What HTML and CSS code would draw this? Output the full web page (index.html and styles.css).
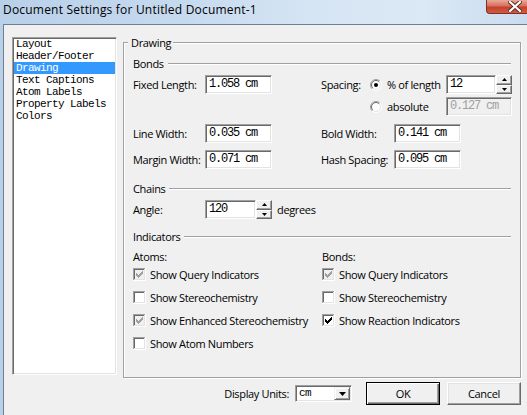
FILE: index.html
```html
<!DOCTYPE html>
<html>
<head>
<meta charset="utf-8">
<title>Document Settings</title>
<link rel="stylesheet" href="styles.css">
</head>
<body>
<div class="window">
  <div class="titlebar">
    <span class="title">Document Settings for Untitled Document-1</span>
    <div class="close">
      <svg width="14" height="11" viewBox="0 0 14 11"><path d="M2 1 L12 10 M12 1 L2 10" stroke="#5a2a22" stroke-width="4" stroke-linecap="square" fill="none"/><path d="M2 1 L12 10 M12 1 L2 10" stroke="#fff" stroke-width="2.2" stroke-linecap="square" fill="none"/></svg>
    </div>
  </div>
  <div class="client">
    <div class="main">
      <div class="list">
        <div class="item">Layout</div>
        <div class="item">Header/Footer</div>
        <div class="item sel">Drawing</div>
        <div class="item">Text Captions</div>
        <div class="item">Atom Labels</div>
        <div class="item">Property Labels</div>
        <div class="item">Colors</div>
      </div>
      <div class="group">
        <div class="group-title">Drawing</div>

        <div class="sect s-bonds"><span>Bonds</span><i class="rule"></i></div>
        <div class="row r-fixed">
          <span class="lbl c-left">Fixed Length:</span>
          <div class="edit e-wide">1.058 cm</div>
          <span class="lbl c-spacing">Spacing:</span>
          <span class="radio"><svg width="12" height="12" viewBox="0 0 12 12"><circle cx="6" cy="6" r="5.5" fill="#fff"/><path d="M2.1 9.9 A5.5 5.5 0 0 1 9.9 2.1" stroke="#a0a0a0" fill="none"/><path d="M9.9 2.1 A5.5 5.5 0 0 1 2.1 9.9" stroke="#fff" fill="none"/><path d="M2.8 9.2 A4.5 4.5 0 0 1 9.2 2.8" stroke="#696969" fill="none"/><path d="M9.2 2.8 A4.5 4.5 0 0 1 2.8 9.2" stroke="#e3e3e3" fill="none"/><circle cx="6" cy="6" r="2" fill="#000"/></svg></span>
          <span class="rlbl">% of length</span>
          <div class="edit e-spin">12</div>
          <div class="spin"><span class="sb"><svg width="5" height="3" viewBox="0 0 5 3"><path d="M0 3 L2.5 0 L5 3Z" fill="#000"/></svg></span><span class="sb"><svg width="5" height="3" viewBox="0 0 5 3"><path d="M0 0 L2.5 3 L5 0Z" fill="#000"/></svg></span></div>
        </div>
        <div class="row r-abs">
          <span class="radio"><svg width="12" height="12" viewBox="0 0 12 12"><circle cx="6" cy="6" r="5.5" fill="#fff"/><path d="M2.1 9.9 A5.5 5.5 0 0 1 9.9 2.1" stroke="#a0a0a0" fill="none"/><path d="M9.9 2.1 A5.5 5.5 0 0 1 2.1 9.9" stroke="#fff" fill="none"/><path d="M2.8 9.2 A4.5 4.5 0 0 1 9.2 2.8" stroke="#696969" fill="none"/><path d="M9.2 2.8 A4.5 4.5 0 0 1 2.8 9.2" stroke="#e3e3e3" fill="none"/></svg></span>
          <span class="rlbl">absolute</span>
          <div class="edit e-abs dis">0.127 cm</div>
        </div>
        <div class="row r-line">
          <span class="lbl c-left">Line Width:</span>
          <div class="edit e-wide">0.035 cm</div>
          <span class="lbl c-right">Bold Width:</span>
          <div class="edit e-wide">0.141 cm</div>
        </div>
        <div class="row r-margin">
          <span class="lbl c-left">Margin Width:</span>
          <div class="edit e-wide">0.071 cm</div>
          <span class="lbl c-right">Hash Spacing:</span>
          <div class="edit e-wide">0.095 cm</div>
        </div>

        <div class="sect s-chains"><span>Chains</span><i class="rule"></i></div>
        <div class="row r-angle">
          <span class="lbl c-left">Angle:</span>
          <div class="edit e-angle">120</div>
          <div class="spin"><span class="sb"><svg width="5" height="3" viewBox="0 0 5 3"><path d="M0 3 L2.5 0 L5 3Z" fill="#000"/></svg></span><span class="sb"><svg width="5" height="3" viewBox="0 0 5 3"><path d="M0 0 L2.5 3 L5 0Z" fill="#000"/></svg></span></div>
          <span class="unit">degrees</span>
        </div>

        <div class="sect s-ind"><span>Indicators</span><i class="rule"></i></div>
        <div class="cols r-heads">
          <span>Atoms:</span>
          <span>Bonds:</span>
        </div>
        <div class="cols crow">
          <label class="chk"><svg class="cb dis" width="13" height="13" viewBox="0 0 13 13"><rect x="0" y="0" width="13" height="13" fill="#fff"/><rect x="0" y="0" width="12" height="12" fill="#a0a0a0"/><rect x="1" y="1" width="11" height="11" fill="#e3e3e3"/><rect x="1" y="1" width="10" height="10" fill="#696969"/><rect x="2" y="2" width="9" height="9" fill="#f0f0f0"/><path d="M3 5h1v3H3zM4 6h1v3H4zM5 7h1v3H5zM6 6h1v3H6zM7 5h1v3H7zM8 4h1v3H8zM9 3h1v3H9z" fill="#a0a0a0"/></svg><span>Show Query Indicators</span></label>
          <label class="chk"><svg class="cb dis" width="13" height="13" viewBox="0 0 13 13"><rect x="0" y="0" width="13" height="13" fill="#fff"/><rect x="0" y="0" width="12" height="12" fill="#a0a0a0"/><rect x="1" y="1" width="11" height="11" fill="#e3e3e3"/><rect x="1" y="1" width="10" height="10" fill="#696969"/><rect x="2" y="2" width="9" height="9" fill="#f0f0f0"/><path d="M3 5h1v3H3zM4 6h1v3H4zM5 7h1v3H5zM6 6h1v3H6zM7 5h1v3H7zM8 4h1v3H8zM9 3h1v3H9z" fill="#a0a0a0"/></svg><span>Show Query Indicators</span></label>
        </div>
        <div class="cols crow">
          <label class="chk"><svg class="cb" width="13" height="13" viewBox="0 0 13 13"><rect x="0" y="0" width="13" height="13" fill="#fff"/><rect x="0" y="0" width="12" height="12" fill="#a0a0a0"/><rect x="1" y="1" width="11" height="11" fill="#e3e3e3"/><rect x="1" y="1" width="10" height="10" fill="#696969"/><rect x="2" y="2" width="9" height="9" fill="#fff"/></svg><span>Show Stereochemistry</span></label>
          <label class="chk"><svg class="cb" width="13" height="13" viewBox="0 0 13 13"><rect x="0" y="0" width="13" height="13" fill="#fff"/><rect x="0" y="0" width="12" height="12" fill="#a0a0a0"/><rect x="1" y="1" width="11" height="11" fill="#e3e3e3"/><rect x="1" y="1" width="10" height="10" fill="#696969"/><rect x="2" y="2" width="9" height="9" fill="#fff"/></svg><span>Show Stereochemistry</span></label>
        </div>
        <div class="cols crow">
          <label class="chk"><svg class="cb dis" width="13" height="13" viewBox="0 0 13 13"><rect x="0" y="0" width="13" height="13" fill="#fff"/><rect x="0" y="0" width="12" height="12" fill="#a0a0a0"/><rect x="1" y="1" width="11" height="11" fill="#e3e3e3"/><rect x="1" y="1" width="10" height="10" fill="#696969"/><rect x="2" y="2" width="9" height="9" fill="#f0f0f0"/><path d="M3 5h1v3H3zM4 6h1v3H4zM5 7h1v3H5zM6 6h1v3H6zM7 5h1v3H7zM8 4h1v3H8zM9 3h1v3H9z" fill="#a0a0a0"/></svg><span>Show Enhanced Stereochemistry</span></label>
          <label class="chk"><svg class="cb" width="13" height="13" viewBox="0 0 13 13"><rect x="0" y="0" width="13" height="13" fill="#fff"/><rect x="0" y="0" width="12" height="12" fill="#a0a0a0"/><rect x="1" y="1" width="11" height="11" fill="#e3e3e3"/><rect x="1" y="1" width="10" height="10" fill="#696969"/><rect x="2" y="2" width="9" height="9" fill="#fff"/><path d="M3 5h1v3H3zM4 6h1v3H4zM5 7h1v3H5zM6 6h1v3H6zM7 5h1v3H7zM8 4h1v3H8zM9 3h1v3H9z" fill="#000"/></svg><span>Show Reaction Indicators</span></label>
        </div>
        <div class="cols crow">
          <label class="chk"><svg class="cb" width="13" height="13" viewBox="0 0 13 13"><rect x="0" y="0" width="13" height="13" fill="#fff"/><rect x="0" y="0" width="12" height="12" fill="#a0a0a0"/><rect x="1" y="1" width="11" height="11" fill="#e3e3e3"/><rect x="1" y="1" width="10" height="10" fill="#696969"/><rect x="2" y="2" width="9" height="9" fill="#fff"/></svg><span>Show Atom Numbers</span></label>
          <span></span>
        </div>
      </div>
    </div>
    <div class="footer">
      <span class="units-label">Display Units:</span>
      <div class="select"><span class="sel-text">cm</span><span class="drop"><svg width="7" height="4" viewBox="0 0 7 4"><path d="M0 0h7L3.5 4z" fill="#000"/></svg></span></div>
      <div class="btn def">OK</div>
      <div class="btn">Cancel</div>
    </div>
  </div>
</div>
</body>
</html>
```

FILE: styles.css
```css
html, body {
  margin: 0;
  padding: 0;
}
body {
  width: 527px;
  height: 415px;
  overflow: hidden;
  font-family: "Open Sans", "Noto Sans", sans-serif;
  font-size: 11px;
  letter-spacing: -0.35px;
  color: #000;
}
.window {
  width: 527px;
  height: 415px;
  display: flex;
  flex-direction: column;
  background: linear-gradient(to right, #b9d0e9 0%, #c6daef 35%, #d6e5f4 60%, #dbe8f5 80%, #c9dcef 100%);
}
.titlebar {
  height: 24px;
  flex: none;
  display: flex;
  justify-content: space-between;
  align-items: flex-start;
}
.title {
  font-size: 12px;
  letter-spacing: 0.2px;
  line-height: 20px;
  padding-left: 3px;
  white-space: nowrap;
}
.close {
  width: 41px;
  height: 14px;
  box-sizing: border-box;
  border: 1px solid #7a3127;
  border-top: none;
  border-right: none;
  border-radius: 0 0 0 4px;
  background: linear-gradient(#e9a99a 0%, #d8705e 45%, #c4402c 55%, #d25a3f 100%);
  display: flex;
  align-items: center;
  padding-left: 21px;
}
.close svg { display: block; }
.client {
  flex: 1;
  margin-left: 3px;
  border-left: 1px solid #6f7f91;
  border-top: 1px solid #6f7f91;
  background: #f0f0f0;
  display: flex;
  flex-direction: column;
  padding: 12px 6px 0 8px;
}
.main {
  display: flex;
  align-items: flex-start;
}
.list {
  width: 105px;
  height: 338px;
  box-sizing: border-box;
  flex: none;
  background: #fff;
  border: 1px solid;
  border-color: #a0a0a0 #fff #fff #a0a0a0;
  box-shadow: inset 1px 1px #696969, inset -1px -1px #e3e3e3;
  padding: 0 1px;
  font-family: "Liberation Mono", "DejaVu Sans Mono", monospace;
  font-size: 11px;
  letter-spacing: -0.6px;
  line-height: 12px;
}
.item {
  height: 12px;
  padding-left: 2px;
  white-space: nowrap;
}
.item.sel {
  background: #3399ff;
  color: #fff;
}
.group {
  width: 398px;
  height: 336px;
  box-sizing: border-box;
  flex: none;
  margin: 5px 0 0 6px;
  border: 1px solid #a0a0a0;
  box-shadow: inset 1px 1px #fff, 1px 1px #fff;
  padding: 0 9px;
}
.group-title {
  width: max-content;
  margin: -8px 0 0 -5px;
  padding: 0 2px 0 3px;
  background: #f0f0f0;
  line-height: 15px;
}
.sect {
  display: flex;
  align-items: center;
  height: 14px;
  line-height: 14px;
}
.sect .rule {
  flex: 1;
  margin-left: 4px;
  border-top: 1px solid #a0a0a0;
  border-bottom: 1px solid #fff;
}
.s-bonds { margin-top: 7px; }
.s-chains { margin-top: 13px; }
.s-ind { margin-top: 11px; }

.row {
  display: flex;
  align-items: center;
  height: 19px;
}
.r-fixed { margin-top: 4px; }
.r-abs { margin-top: 3px; padding-left: 237px; }
.r-line { margin-top: 8px; }
.r-margin { margin-top: 7px; }
.r-angle { margin-top: 4px; }

.lbl { white-space: nowrap; }
.c-left { width: 72px; flex: none; }
.c-spacing { width: 49px; flex: none; margin-left: 49px; }
.c-right { width: 73px; flex: none; margin-left: 49px; }

.radio { width: 12px; height: 12px; flex: none; }
.radio svg { display: block; }
.rlbl { width: 59px; flex: none; margin-left: 5px; white-space: nowrap; }

.edit {
  box-sizing: border-box;
  height: 19px;
  flex: none;
  background: #fff;
  border: 1px solid;
  border-color: #a0a0a0 #fff #fff #a0a0a0;
  box-shadow: inset 1px 1px #696969, inset -1px -1px #e3e3e3;
  padding-left: 3px;
  font-family: "Liberation Mono", "DejaVu Sans Mono", monospace;
  font-size: 12px;
  letter-spacing: -1.2px;
  line-height: 17px;
  white-space: nowrap;
}
.edit.dis {
  background: #f0f0f0;
  color: #a0a0a0;
}
.e-wide { width: 67px; }
.e-spin { width: 50px; }
.e-abs { width: 66px; }
.e-angle { width: 51px; }

.spin {
  width: 16px;
  height: 19px;
  flex: none;
  display: flex;
  flex-direction: column;
}
.sb {
  flex: 1;
  box-sizing: border-box;
  background: #f0f0f0;
  border: 1px solid;
  border-color: #fff #696969 #696969 #fff;
  box-shadow: inset -1px -1px #a0a0a0;
  display: flex;
  align-items: center;
  justify-content: center;
}
.sb svg { display: block; }
.unit { margin-left: 5px; }

.cols {
  display: grid;
  grid-template-columns: 189px 1fr;
  align-items: center;
}
.r-heads {
  height: 14px;
  margin-top: 5px;
}
.crow { height: 23px; }
.chk {
  display: flex;
  align-items: center;
  gap: 4px;
  white-space: nowrap;
}
.cb { display: block; flex: none; }

.footer {
  display: flex;
  justify-content: flex-end;
  align-items: center;
  height: 23px;
  margin-top: 4px;
}
.units-label { margin-right: 6px; }
.select {
  width: 57px;
  height: 17px;
  box-sizing: border-box;
  background: #fff;
  border: 1px solid;
  border-color: #a0a0a0 #fff #fff #a0a0a0;
  box-shadow: inset 1px 1px #696969, inset -1px -1px #e3e3e3;
  display: flex;
  align-items: stretch;
  padding: 1px;
}
.sel-text {
  flex: 1;
  padding-left: 2px;
  font-family: "Liberation Mono", "DejaVu Sans Mono", monospace;
  font-size: 11px;
  letter-spacing: -0.6px;
  line-height: 13px;
}
.drop {
  width: 16px;
  box-sizing: border-box;
  background: #f0f0f0;
  border: 1px solid;
  border-color: #f0f0f0 #696969 #696969 #f0f0f0;
  box-shadow: inset 1px 1px #fff, inset -1px -1px #a0a0a0;
  display: flex;
  align-items: center;
  justify-content: center;
}
.drop svg { display: block; }
.btn {
  width: 74px;
  height: 23px;
  box-sizing: border-box;
  background: #f0f0f0;
  border: 1px solid;
  border-color: #fff #696969 #696969 #fff;
  box-shadow: inset -1px -1px #a0a0a0, inset 1px 1px #e3e3e3;
  display: flex;
  align-items: center;
  justify-content: center;
  margin-left: 7px;
}
.btn.def {
  margin-left: 14px;
  border: 1px solid #000;
  box-shadow: inset 1px 1px #fff, inset -1px -1px #696969, inset -2px -2px #a0a0a0;
}
```
